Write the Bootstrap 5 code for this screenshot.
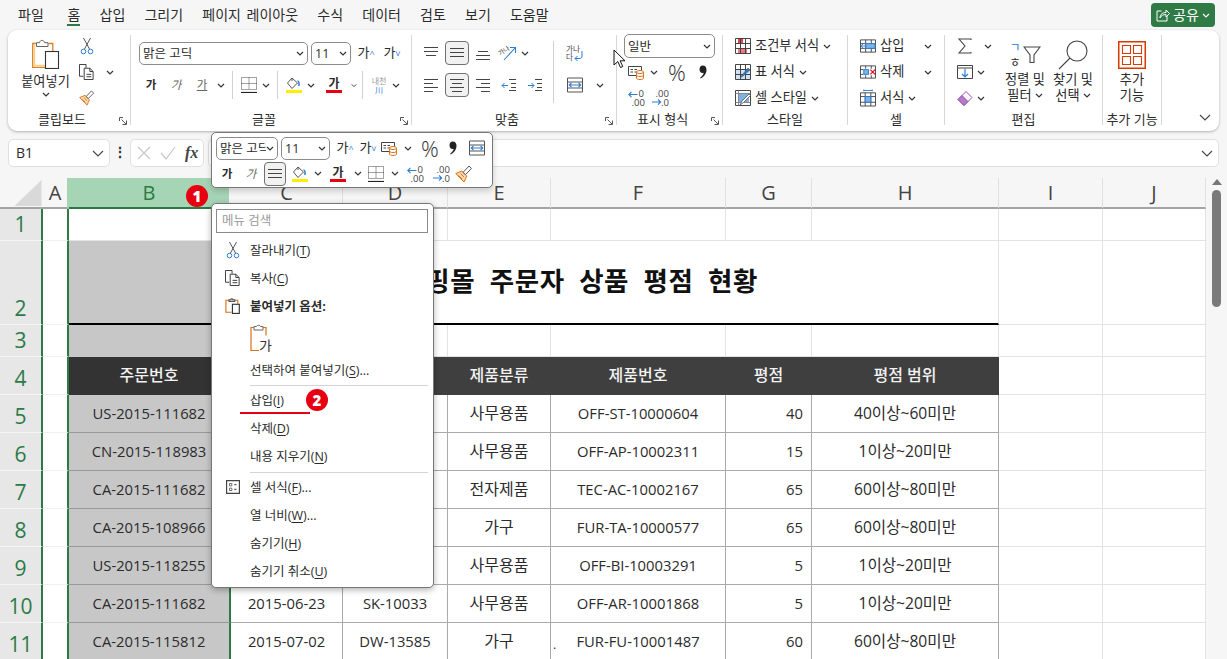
<!DOCTYPE html>
<html lang="ko">
<head>
<meta charset="utf-8">
<title>Excel</title>
<link href="https://cdn.jsdelivr.net/npm/bootstrap@5.3.0/dist/css/bootstrap.min.css" rel="stylesheet">
<style>
html,body{height:659px;overflow:hidden}
body{background:#f6f6f6;font-family:"Open Sans","Noto Sans CJK KR",sans-serif;color:#2b2b2b;font-size:12.5px;line-height:1.2;position:relative}
svg{display:block;flex:none;overflow:visible}
.tw2{width:2px}.tw6{width:6px}.tw8{width:8px}.tw10{width:10px}.tw12{width:12px}.tw14{width:14px}.tw16{width:16px}.tw18{width:18px}.tw20{width:20px}.tw22{width:22px}.tw24{width:24px}.tw26{width:26px}.tw28{width:28px}.tw30{width:30px}.tw32{width:32px}.tw34{width:34px}
.tw2,.tw6,.tw8,.tw10,.tw12,.tw14,.tw16,.tw18,.tw20,.tw22,.tw24,.tw26,.tw28,.tw30,.tw32,.tw34{flex:none}
.cv{height:5px}.h14{height:14px}.h16{height:16px}.h18{height:18px}.h20{height:20px}.h24{height:24px}
.tl{display:flex;align-items:center;justify-content:center;flex:none}
/* tabs */
.tabbar{height:30px;padding-left:18px;gap:19.2px;font-size:14px;word-spacing:2px}
.tabitem{height:30px;line-height:30px;position:relative;white-space:nowrap}
.tabitem:first-child{margin-right:4.500px}
.tabitem.on::after{content:"";position:absolute;left:0;right:0;top:24px;height:2px;background:#2a7a45}
.sharebtn{position:absolute;left:1151px;top:3px;width:64px;height:24px;background:#2f7b46;color:#fff;border-radius:4px;font-size:14px;gap:3px}
/* ribbon */
.ribbonbox{margin:0 8px;height:101px;background:#fff;border-radius:9px;box-shadow:0 1px 3px rgba(0,0,0,.28);padding:5px 0 6px;font-size:13.2px}
.rgroup{height:90px;border-right:1px solid #d8d8d8;flex:none}
.g1{width:123px}.g2{width:281px}.g3{width:205px}.g4{width:106px}.g5{width:125px}.g6{width:97px}.g7{width:158px}.g8{width:59px}
.rbody{height:77px;display:flex}
.rlabel{height:14px;line-height:14px;font-size:13px;display:flex;white-space:nowrap}
.rlabel span{flex:1;text-align:center}
.launch{width:8px;height:8px;margin:5px 3px 0 3px}
.rows3{margin-top:-2px;display:flex;flex-direction:column}
.rw{height:26px;display:flex;align-items:center;white-space:nowrap}
.rows2{padding-top:2px;display:flex;flex-direction:column}
.rw2{height:32px;display:flex;align-items:center}
.pastecol{width:71px;padding:4px 0 0 4px;display:flex;flex-direction:column;align-items:center;line-height:14px}
.pastecol svg.big{margin-bottom:5px}
.selbox{border:1px solid #8c8c8c;border-radius:5px;background:#fff;display:flex;align-items:center;justify-content:space-between;padding:0 3px 0 3px;flex:none;overflow:hidden;white-space:nowrap;font-size:12.5px}
.sf{width:169px;height:23px}.ss{width:40px;height:23px;margin-left:3px}.sn{width:91px;height:24px;margin-left:7px}
.boxed{background:#f1f1f1;border:1px solid #707070;border-radius:4px}
.sepv{width:1px;background:#d0d0d0;flex:none;align-self:stretch;margin:2px 5px}
.sepl{width:1px;height:62px;background:#d0d0d0;margin:6px 5px 0 5px;flex:none}
.kb{font-weight:700;font-size:11.5px}.ki{font-style:italic;color:#666;font-size:11.5px}.ku{text-decoration:underline;color:#666;font-size:11.5px}
.grow{font-size:13px;display:flex;justify-content:center}
.grow i{font-style:normal;color:#2b7cd3;font-size:9px;line-height:9px}
.fcic{border-bottom:3px solid #e60012;font-weight:700;line-height:13px;width:16px;text-align:center;font-size:12px}
.flic{border-bottom:3px solid #ffee00;width:16px;height:16px;display:block}
.phon{font-size:8px;line-height:9px;text-align:center;color:#999}
.phon b{display:block;font-weight:400;color:#2b7cd3}
.pad12{padding-left:12px}
.gapi{gap:4px}
.cmdcol{display:flex;flex-direction:column;align-items:center;text-align:center;flex:none;line-height:16px;padding-top:4px;white-space:nowrap}
.lnk{display:inline-flex;align-items:center;gap:3px}
.sortwrap{height:32px;display:flex;align-items:center;justify-content:center}
.col50{width:50px}.col46{width:46px}.col55{width:55px;padding-left:10px}
.w40t{width:40px}
/* formula */
.fbar{margin:8px 8px 0;height:28px}
.fbox{background:#fff;border:1px solid #e0e0e0;border-radius:5px;height:28px;display:flex;align-items:center}
.fname{width:102px;padding:0 5px 0 7px;justify-content:space-between;font-size:14px}
.fdots{width:20px;text-align:center;font-weight:700;font-size:14px;line-height:26px}
.ffx{width:74px;gap:9px;padding:0 0 0 6px}
.ffx em{font-family:"Liberation Serif",serif;font-weight:700;font-size:16px;color:#444}
.fin{flex:1;margin-left:4px;justify-content:flex-end;padding-right:5px}
/* sheet */
.sheetwrap{margin-top:11px;height:481px;overflow:hidden}
.xlgrid{table-layout:fixed;width:1206px;border-collapse:separate;border-spacing:0;flex:none;font-size:14.8px}
.xlgrid td{padding:0;text-align:center;white-space:nowrap;overflow:visible;background:#fff;border-right:1px solid #e3e3e3;border-bottom:1px solid #e3e3e3;vertical-align:middle;color:#2b2b2b}
.xlgrid tr.hrow td{background:#f6f6f6;font-size:20px;color:#444;border-bottom:2px solid #a4a4a4;border-right:1px solid #e0e0e0;height:31px}
.xlgrid tr.hrow td.cornr{border-right:0}
.xlgrid tr.hrow td.acolh{border-right:2px solid #a6d5b6}
.xlgrid tr.hrow td.hb{background:#a6d5b6;color:#2d7a46;border-right:2px solid #f6f6f6;border-bottom:2px solid #2d7a46}
.xlgrid td.rhd{background:#e7e7e7;color:#2d7a46;font-size:21px;border-right:2px solid #2d7a46;border-bottom:1px solid #f4f4f4;vertical-align:bottom;line-height:31px}
.xlgrid td.acol{border-right:2px solid #2d7a46;border-bottom-color:#f0f0f0}
.xlgrid td.bcell{background:#c7c7c7;border-right:2px solid #2d7a46;border-bottom:1px solid #999}
.xlgrid td.bfirst{background:#fff;border-bottom:1px solid #e3e3e3}
.xlgrid td.bnob{border-bottom-color:#c7c7c7}
.xlgrid td.ttl{font-size:26.5px;letter-spacing:.6px;word-spacing:7px;font-weight:700;color:#111;text-align:right;padding-right:240px;padding-bottom:1px;border-bottom:2px solid #000}
.xlgrid td.ttlb{border-bottom:2px solid #000}
.xlgrid td.dk{background:#3f3f3f;color:#f2f2f2;border-right:1px solid #3f3f3f;border-bottom-color:#3f3f3f;font-weight:500;font-size:16px}
.xlgrid td.dkb{background:#333;color:#f2f2f2;border-bottom-color:#333;font-size:16px;font-weight:500}
.xlgrid td.dc{border-right:1px solid #aaa;border-bottom:1px solid #aaa}
.xlgrid td.ko{font-size:16px}
.xlgrid td.mx{font-size:15.6px}
.xlgrid td.rt{text-align:right;padding-right:8px}
.dotmk{position:absolute;left:553px;top:638px;font-size:12px}
.vscroll{width:21px;height:481px;background:#f6f6f6;position:relative;display:flex;flex-direction:column;align-items:center;padding-top:1px;flex:none}
.vthumb{width:9px;height:117px;border-radius:5px;background:#7a7a7a;margin-top:5px}
/* floating */
.minibar{position:absolute;left:211px;top:132px;width:282px;height:56px;background:#fff;border:1px solid #777;border-radius:5px;box-shadow:0 3px 6px rgba(0,0,0,.18);padding:3px 0 0 4px;z-index:5}
.mrow{height:24px;display:flex;align-items:center}
.mrow2{height:25px;display:flex;align-items:center;margin-top:1px}
.msf{width:62px;height:23px}.mss{width:49px;height:23px;margin-left:3px}
.ctxmenu{position:absolute;left:211px;top:203px;width:223px;height:385px;background:#fff;border:1px solid #777;border-radius:5px;box-shadow:0 2px 6px rgba(0,0,0,.3);padding:5px 5px 0 4px;z-index:5;font-size:12.5px}
.ctxsearch{height:24px;border:1px solid #8a8a8a;color:#999;padding:0 5px;line-height:22px;font-size:12.5px;margin-bottom:3px}
.ctxrow{height:28px;display:flex;align-items:center;white-space:nowrap}
.ctxic{width:34px;display:flex;justify-content:center;flex:none}
.ctxpaste{height:36px;padding-left:34px;display:flex;align-items:center}
.ctxdiv{height:2px;margin-left:34px;border-bottom:1px solid #d4d4d4}
.ctxdiv.tall{height:3px}
.ctxrow u{text-underline-offset:2px}
.redbadge{position:absolute;width:22px;height:22px;border-radius:50%;background:#e60012;color:#fff;font-weight:800;font-size:15px;line-height:22px;text-align:center;z-index:6;font-family:"Open Sans",sans-serif}
.b1pos{left:186px;top:185px}.b2pos{left:306px;top:389px}
.redline{position:absolute;left:240px;top:412px;width:70px;height:2px;background:#e60012;z-index:6}
.mousec{position:absolute;left:613px;top:49px;z-index:7;width:13px;height:20px}
.cw0{width:43px}.cwa{width:26px}.cwb{width:162px}.cwc{width:112px}.cwd{width:105px}.cwe{width:103px}.cwf{width:175px}.cwg{width:86px}.cwh{width:187px}.cwi{width:104px}.cwj{width:103px}
.r32 td{height:32px}.r84 td{height:84px}.r38 td{height:38px}
.ps-6px{padding-left:6px}.ms-7px{margin-left:7px}.me-1px{margin-right:1px}
.pct{font-size:22px;color:#333;font-weight:300}
.sorttx{font-size:12px;line-height:15px;margin-right:2px;text-align:center}
.sorttx b{color:#2b7cd3;font-weight:400}
</style>
</head>
<body>
<svg width="0" height="0" class="position-absolute">
<defs>
<symbol id="cv" viewBox="0 0 8 5"><path d="M1 1l3 3 3-3" fill="none" stroke="#333" stroke-width="1.2"/></symbol>
<symbol id="cvw" viewBox="0 0 8 5"><path d="M1 1l3 3 3-3" fill="none" stroke="#fff" stroke-width="1.2"/></symbol>
<symbol id="cut" viewBox="0 0 14 18"><path d="M3.5 1l6 11M10.5 1l-6 11" fill="none" stroke="#555"/><circle cx="3.5" cy="14.5" r="2.3" fill="none" stroke="#2b7cd3"/><circle cx="10.5" cy="14.5" r="2.3" fill="none" stroke="#2b7cd3"/></symbol>
<symbol id="copy" viewBox="0 0 17 17"><path d="M4.5 13H.5V.5h7V4" fill="none" stroke="#333"/><path d="M5.5 4.5h6l3.500 3.500v8.500h-9.500zM11.500 4.500V8h3.500M8 11h5M8 13.500h5" fill="none" stroke="#333"/></symbol>
<symbol id="brush" viewBox="0 0 18 18"><path d="M.8 8.500l6-2.500 5 5-2.800 6z" fill="#fbd9ac" stroke="#d9701a"/><path d="M3.500 10.500l3.500 3.500M5.500 8.500l3.500 3.500" stroke="#d9701a" fill="none"/><path d="M8 7.500l6-6.500 2.500 2.500-6 6z" fill="#fff" stroke="#555"/></symbol>
<symbol id="pastebig" viewBox="0 0 28 30"><path d="M4 4.500H.7v23.800h12.800" fill="#fff" stroke="#d9821f" stroke-width="1.300"/><path d="M16.500 4.500h4.300v7.500" fill="none" stroke="#d9821f" stroke-width="1.300"/><path d="M2.300 6v20.700h11" fill="none" stroke="#f6d08f" stroke-width="1.800"/><path d="M4.500 7.500V3.700h3C8 .6 12 .6 12.500 3.700h3.500v3.800z" fill="#fff" stroke="#666"/><rect x="13.500" y="12.500" width="13" height="17" fill="#fff" stroke="#333" stroke-width="1.100"/></symbol>
<symbol id="borderi" viewBox="0 0 16 16"><path d="M.5.5h15v12H.5zM8 .5v12M.5 6.500h15" fill="none" stroke="#444" stroke-dasharray="1 1"/><path d="M0 15.500h16" stroke="#222" stroke-width="1.200"/></symbol>
<symbol id="bucket" viewBox="0 0 16 13"><path d="M6 1L1.500 6 6 11.500l5.500-5.500z" fill="#fff" stroke="#555"/><path d="M6 1v3" stroke="#555"/><path d="M13 9V6c0-1-1-2-1.500-2" fill="none" stroke="#2b7cd3" stroke-width="1.500"/></symbol>
<symbol id="alT" viewBox="0 0 16 16"><path d="M1 2.500h14M1 6.500h14M3 10.500h10" stroke="#444" fill="none"/></symbol>
<symbol id="alM" viewBox="0 0 16 16"><path d="M1 3.500h14M1 7.500h14M1 11.500h14" stroke="#444" fill="none"/></symbol>
<symbol id="alB" viewBox="0 0 16 16"><path d="M3 6.500h10M1 10.500h14M1 14.500h14" stroke="#444" fill="none"/></symbol>
<symbol id="alL" viewBox="0 0 16 16"><path d="M1 2.500h14M1 6.500h9M1 10.500h14M1 14.500h9" stroke="#444" fill="none"/></symbol>
<symbol id="alC" viewBox="0 0 16 16"><path d="M1 2.500h14M3 6.500h10M1 10.500h14M3 14.500h10" stroke="#444" fill="none"/></symbol>
<symbol id="alR" viewBox="0 0 16 16"><path d="M1 2.500h14M6 6.500h9M1 10.500h14M6 14.500h9" stroke="#444" fill="none"/></symbol>
<symbol id="indD" viewBox="0 0 16 16"><path d="M8 2.500h7M8 13.500h7M10 6.500h5M10 10.500h5" stroke="#444" fill="none"/><path d="M7 8.500H1M3.500 6L1 8.500 3.500 11" stroke="#2b7cd3" fill="none"/></symbol>
<symbol id="indI" viewBox="0 0 16 16"><path d="M8 2.500h7M8 13.500h7M10 6.500h5M10 10.500h5" stroke="#444" fill="none"/><path d="M1 8.500h6M4.500 6L7 8.500 4.500 11" stroke="#2b7cd3" fill="none"/></symbol>
<symbol id="orient" viewBox="0 0 18 16"><text x="0" y="9" font-size="6.500" fill="#444" transform="rotate(-35 4 8)" font-family="Noto Sans CJK KR">가나</text><path d="M5 15L16 3M11 2.500h5.500V8" fill="none" stroke="#2b7cd3" stroke-width="1.100"/></symbol>
<symbol id="wrapi" viewBox="0 0 18 18"><text x="0" y="8" font-size="7.500" fill="#444" font-family="Noto Sans CJK KR">가나</text><text x="0" y="16" font-size="7.500" fill="#444" font-family="Noto Sans CJK KR">다</text><path d="M16 7v5c0 2-1 2.500-2 2.500H9M11.500 12L9 14.500l2.500 2.500" fill="none" stroke="#2b7cd3"/></symbol>
<symbol id="merge" viewBox="0 0 16 16"><path d="M.5 1h15v14H.5zM.5 5h15M.5 11h15" fill="none" stroke="#555"/><path d="M2 8h12M4.500 5.800L2.200 8l2.300 2.200M11.500 5.800L13.800 8l-2.300 2.200" fill="none" stroke="#2b7cd3" stroke-width="1.100"/></symbol>
<symbol id="celf" viewBox="0 0 16 16"><path d="M.5 2.500h13v9H.5z" fill="#fff" stroke="#444"/><path d="M2.500 5.500h2.500M6.500 5.500H9M2.500 8h2.500M6.500 8H9" stroke="#444"/><path d="M8.500 8v6c0 2 7 2 7 0V8" fill="#fff" stroke="#d9701a"/><ellipse cx="12" cy="8" rx="3.500" ry="1.500" fill="#fff" stroke="#d9701a"/><path d="M8.500 11c0 2 7 2 7 0" fill="none" stroke="#d9701a"/></symbol>
<symbol id="cma" viewBox="0 0 8 14"><path d="M3.800.500c2.400 0 3.700 1.800 3.700 4.200 0 3.800-2.500 7-5.800 8.800l-.6-.8c2.100-1.500 3.400-3.300 3.600-4.900-.3.200-.7.300-1.200.3C1.800 8.100.5 6.400.5 4.300.5 2.200 1.800.5 3.800.500z" fill="#222"/></symbol>
<symbol id="decL" viewBox="0 0 16 16"><text x="10.500" y="7" font-size="9.500" fill="#444" font-family="Open Sans">0</text><text x="3.500" y="15.500" font-size="9.500" fill="#444" font-family="Open Sans">.00</text><path d="M9.500 4.500H.7M3.500 1.800L.8 4.500l2.700 2.700" fill="none" stroke="#2b7cd3" stroke-width="1.100"/></symbol>
<symbol id="decR" viewBox="0 0 16 16"><text x="3.500" y="7" font-size="9.500" fill="#444" font-family="Open Sans">.00</text><text x="9" y="15.500" font-size="9.500" fill="#444" font-family="Open Sans">.0</text><path d="M0 12h8.500M6 9.300l2.700 2.700L6 14.700" fill="none" stroke="#2b7cd3" stroke-width="1.100"/></symbol>
<symbol id="gcond" viewBox="0 0 16 16"><rect x="3" y="1" width="5" height="5" fill="#e6404a"/><rect x="3" y="10" width="9" height="5" fill="#ee7a80"/><path d="M.5.500h15v15H.5zM.5 5.500h15M.5 10.500h15M5.500.500v15M10.500.500v15" fill="none" stroke="#444"/></symbol>
<symbol id="gtab" viewBox="0 0 16 16"><path d="M1 5h14v10H1z" fill="#cfe3f5"/><path d="M.5.500h15v15H.5zM.5 5.500h15M.5 10.500h15M5.500.500v15M10.500.500v15" fill="none" stroke="#444"/><path d="M5 14l2-3 6-7 2 2-7 6z" fill="#2b7cd3" stroke="#555" stroke-width=".6"/></symbol>
<symbol id="gsty" viewBox="0 0 16 16"><path d="M3 3h11v9H3z" fill="#7db2e6"/><path d="M.5.500h15v15H.5z" fill="none" stroke="#444"/><path d="M3.500.500v15M.5 3.500h15M.5 12.500h15" stroke="#888" fill="none"/><path d="M5 15l2-4 7-7 1.500 1.500-7 7z" fill="#fff" stroke="#555" stroke-width=".8"/></symbol>
<symbol id="cins" viewBox="0 0 17 16"><path d="M.5 1.500h16v13H.5zM.5 5.500h16M.5 10.500h16M6 1.500v13M12 1.500v13" fill="none" stroke="#444"/><rect x="6" y="5.500" width="10" height="5" fill="#7db2e6" stroke="#2b7cd3"/><path d="M7 8H1M3.500 5.500L1 8l2.500 2.500" fill="#fff" stroke="#2b7cd3"/></symbol>
<symbol id="cdel" viewBox="0 0 17 16"><path d="M.5 1.500h16M.5 14.500h16M.5 1.500v13M16.500 1.500v13M.5 5.500h3M.5 10.500h3M6 1.500v3M6 11.500v3M12 1.500v3M12 11.500v3" fill="none" stroke="#444"/><rect x="4" y="5.500" width="5" height="5" fill="#7db2e6" stroke="#2b7cd3"/><path d="M11 5.500l5 5M16 5.500l-5 5" stroke="#e60012" stroke-width="1.200"/></symbol>
<symbol id="cfmt" viewBox="0 0 17 18"><path d="M.5 3.500h16v14H.5zM.5 7.500h16M.5 13.500h16M5.500 3.500v14M11.500 3.500v14" fill="none" stroke="#444"/><rect x="5.500" y="7.500" width="6" height="6" fill="#7db2e6" stroke="#2b7cd3"/><path d="M4 1h9M4 0v2M13 0v2" stroke="#2b7cd3" fill="none"/></symbol>
<symbol id="sigma" viewBox="0 0 14 16"><path d="M13 2V1H1l6 7-6 7h12v-1" fill="none" stroke="#444" stroke-width="1.100"/></symbol>
<symbol id="filldn" viewBox="0 0 16 14"><path d="M.5.500h15v13H.5zM.5 3h15" fill="none" stroke="#444"/><path d="M8 4v8M5 9l3 3 3-3" fill="none" stroke="#2b7cd3" stroke-width="1.200"/></symbol>
<symbol id="eraser" viewBox="0 0 16 16"><path d="M1 9.500L9 1.500l6 6-8 8z" fill="#fff" stroke="#9c4fb5"/><path d="M1 9.500L5 5.500l6 6-4 4z" fill="#b27cc6" stroke="#9c4fb5"/></symbol>
<symbol id="funnel" viewBox="0 0 18 18"><path d="M1 1h16l-6 8v7.500H7V9z" fill="#fff" stroke="#444" stroke-width="1.100"/></symbol>
<symbol id="lens" viewBox="0 0 30 30"><circle cx="19" cy="11" r="10" fill="#fff" stroke="#444" stroke-width="1.100"/><path d="M12 18L1 29" stroke="#444" stroke-width="1.100"/></symbol>
<symbol id="addin" viewBox="0 0 28 28"><path d="M.75.750h26.500v26.500H.75z" fill="none" stroke="#d83b01" stroke-width="1.500"/><path d="M4.500 4.500h8v8h-8zM15.500 4.500h8v8h-8zM4.500 15.500h8v8h-8zM15.500 15.500h8v8h-8z" fill="none" stroke="#d83b01" stroke-width="1.100"/></symbol>
<symbol id="launch" viewBox="0 0 8 8"><path d="M.5 4V.5H4M2.500 2.500l4.500 4.500M7.500 3.500v4H3.500" fill="none" stroke="#555"/></symbol>
<symbol id="sharei" viewBox="0 0 14 14"><path d="M5.500 3H1v10h10V8" fill="none" stroke="#fff"/><path d="M4 10c0-4 3-5.500 6-5.500V2l3.500 3.500L10 9V6.500C7.500 6.500 5 7.500 4 10z" fill="none" stroke="#fff"/></symbol>
<symbol id="pastesm" viewBox="0 0 14 14"><path d="M3.500 2H.8v10.500h5" fill="none" stroke="#d9701a"/><path d="M8.500 2h2.700v3" fill="none" stroke="#d9701a"/><path d="M3.500 3V1.500H5C5.300.5 6.700.5 7 1.500h1.500V3z" fill="#fff" stroke="#555"/><rect x="6.500" y="5.500" width="6" height="8" fill="#fff" stroke="#333"/></symbol>
<symbol id="pastetx" viewBox="0 0 24 28"><path d="M5 3.500H1v23h8" fill="none" stroke="#d9701a" stroke-width="1.200"/><path d="M12 3.500h4v8" fill="none" stroke="#d9701a" stroke-width="1.200"/><path d="M4 6V2.500h2.500C7 .8 10 .8 10.500 2.500H13V6z" fill="#fff" stroke="#666"/><text x="9" y="27" font-size="14" fill="#333" font-family="Noto Sans CJK KR">가</text></symbol>
<symbol id="fmtc" viewBox="0 0 12 12"><path d="M.5.500h11v11H.5z" fill="#fff" stroke="#444"/><path d="M3 3h2v2H3zM3 7h2v2H3z" fill="none" stroke="#666" stroke-width=".8"/><path d="M7 4h2M7 8h2" stroke="#666"/></symbol>
<symbol id="cross" viewBox="0 0 14 14"><path d="M1 1l12 12M13 1L1 13" stroke="#c8c8c8" stroke-width="1.200"/></symbol>
<symbol id="check" viewBox="0 0 16 14"><path d="M1 7l5 6L15 1" fill="none" stroke="#c8c8c8" stroke-width="1.200"/></symbol>
<symbol id="dnlg" viewBox="0 0 12 7"><path d="M1 1l5 5 5-5" fill="none" stroke="#444" stroke-width="1.100"/></symbol>
<symbol id="corner" viewBox="0 0 28 27"><path d="M28 0v27H0z" fill="#d9d9d9"/></symbol>
</defs>
</svg>

<nav class="tabbar d-flex align-items-start">
  <span class="tabitem">파일</span><span class="tabitem on">홈</span><span class="tabitem">삽입</span><span class="tabitem">그리기</span><span class="tabitem">페이지 레이아웃</span><span class="tabitem">수식</span><span class="tabitem">데이터</span><span class="tabitem">검토</span><span class="tabitem">보기</span><span class="tabitem">도움말</span>
</nav>
<div class="sharebtn d-flex align-items-center justify-content-center"><svg class="tw14 h14"><use href="#sharei"/></svg><span>공유</span><svg class="tw8 cv"><use href="#cvw"/></svg></div>

<section class="ribbonbox d-flex">
  <!-- clipboard -->
  <div class="rgroup g1">
    <div class="rbody">
      <div class="pastecol"><svg class="big tw28" height="30"><use href="#pastebig"/></svg><span>붙여넣기</span><svg class="tw8 cv mt-1"><use href="#cv"/></svg></div>
      <div class="rows3">
        <div class="rw"><svg class="tw16 h18"><use href="#cut"/></svg></div>
        <div class="rw"><svg class="tw16 h16"><use href="#copy"/></svg><svg class="tw30 cv"><use href="#cv"/></svg></div>
        <div class="rw"><svg class="tw16 h16"><use href="#brush"/></svg></div>
      </div>
    </div>
    <div class="rlabel"><span>클립보드</span><svg class="launch"><use href="#launch"/></svg></div>
  </div>
  <!-- font -->
  <div class="rgroup g2">
    <div class="rbody ps-2"><div class="rows2">
      <div class="rw2">
        <div class="selbox sf"><span>맑은 고딕</span><svg class="tw8 cv"><use href="#cv"/></svg></div>
        <div class="selbox ss"><span>11</span><svg class="tw8 cv"><use href="#cv"/></svg></div>
        <span class="tl tw30 grow">가<i>^</i></span><span class="tl tw22 grow">가<i>˅</i></span>
      </div>
      <div class="rw2">
        <span class="tl tw24 kb">가</span><span class="tl tw26 ki">가</span><span class="tl tw26 ku">가</span><svg class="tw12 cv"><use href="#cv"/></svg>
        <i class="sepv"></i>
        <svg class="tw22 h16"><use href="#borderi"/></svg><svg class="tw12 cv"><use href="#cv"/></svg>
        <i class="sepv"></i>
        <span class="tl tw22"><span class="flic"><svg class="tw16" height="13"><use href="#bucket"/></svg></span></span><svg class="tw12 cv"><use href="#cv"/></svg>
        <span class="tl tw34"><span class="fcic">가</span></span><svg class="tw6 cv"><use href="#cv"/></svg>
        <i class="sepv"></i>
        <span class="tl tw22 phon"><span>내천<b>川</b></span></span><svg class="tw12 cv"><use href="#cv"/></svg>
      </div>
    </div></div>
    <div class="rlabel"><span>글꼴</span><svg class="launch"><use href="#launch"/></svg></div>
  </div>
  <!-- align -->
  <div class="rgroup g3">
    <div class="rbody">
      <div class="rows2 ps-6px">
        <div class="rw2"><svg class="tw26 h16"><use href="#alT"/></svg><span class="tl tw26"><span class="tl boxed tw24 h24"><svg class="tw16 h16"><use href="#alM"/></svg></span></span><svg class="tw26 h16"><use href="#alB"/></svg><svg class="tw24 h16"><use href="#orient"/></svg><svg class="tw10 cv"><use href="#cv"/></svg></div>
        <div class="rw2"><svg class="tw26 h16"><use href="#alL"/></svg><span class="tl tw26"><span class="tl boxed tw24 h24"><svg class="tw16 h16"><use href="#alC"/></svg></span></span><svg class="tw26 h16"><use href="#alR"/></svg><svg class="tw26 h16"><use href="#indD"/></svg><svg class="tw26 h16"><use href="#indI"/></svg></div>
      </div>
      <i class="sepl"></i>
      <div class="rows2">
        <div class="rw2"><svg class="tw32 h18"><use href="#wrapi"/></svg></div>
        <div class="rw2"><svg class="tw32 h16"><use href="#merge"/></svg><svg class="tw18 cv"><use href="#cv"/></svg></div>
      </div>
    </div>
    <div class="rlabel"><span>맞춤</span><svg class="launch"><use href="#launch"/></svg></div>
  </div>
  <!-- number -->
  <div class="rgroup g4">
    <div class="rbody"><div class="rows3">
      <div class="rw"><div class="selbox sn"><span>일반</span><svg class="tw8 cv"><use href="#cv"/></svg></div></div>
      <div class="rw ms-7px"><svg class="tw24 h16"><use href="#celf"/></svg><svg class="tw12 cv"><use href="#cv"/></svg><span class="tl tw34 pct">%</span><svg class="tw18 h14"><use href="#cma"/></svg></div>
      <div class="rw ms-7px"><svg class="tw24 h16"><use href="#decL"/></svg><svg class="tw24 h16"><use href="#decR"/></svg></div>
    </div></div>
    <div class="rlabel"><span>표시 형식</span><svg class="launch"><use href="#launch"/></svg></div>
  </div>
  <!-- styles -->
  <div class="rgroup g5">
    <div class="rbody pad12"><div class="rows3">
      <div class="rw gapi"><svg class="tw16 h16"><use href="#gcond"/></svg><span>조건부 서식</span><svg class="tw8 cv"><use href="#cv"/></svg></div>
      <div class="rw gapi"><svg class="tw16 h16"><use href="#gtab"/></svg><span>표 서식</span><svg class="tw8 cv"><use href="#cv"/></svg></div>
      <div class="rw gapi"><svg class="tw16 h16"><use href="#gsty"/></svg><span>셀 스타일</span><svg class="tw8 cv"><use href="#cv"/></svg></div>
    </div></div>
    <div class="rlabel"><span>스타일</span></div>
  </div>
  <!-- cells -->
  <div class="rgroup g6">
    <div class="rbody pad12"><div class="rows3">
      <div class="rw gapi"><svg class="tw16 h16"><use href="#cins"/></svg><span class="w40t">삽입</span><svg class="tw8 cv"><use href="#cv"/></svg></div>
      <div class="rw gapi"><svg class="tw16 h16"><use href="#cdel"/></svg><span class="w40t">삭제</span><svg class="tw8 cv"><use href="#cv"/></svg></div>
      <div class="rw gapi"><svg class="tw16 h18"><use href="#cfmt"/></svg><span>서식</span><svg class="tw8 cv"><use href="#cv"/></svg></div>
    </div></div>
    <div class="rlabel"><span>셀</span></div>
  </div>
  <!-- edit -->
  <div class="rgroup g7">
    <div class="rbody">
      <div class="rows3 col55">
        <div class="rw"><svg class="tw20 h16"><use href="#sigma"/></svg><svg class="tw18 cv ps-2"><use href="#cv"/></svg></div>
        <div class="rw"><svg class="tw20 h14"><use href="#filldn"/></svg><svg class="tw12 cv"><use href="#cv"/></svg></div>
        <div class="rw"><svg class="tw20 h16"><use href="#eraser"/></svg><svg class="tw12 cv"><use href="#cv"/></svg></div>
      </div>
      <div class="cmdcol col50"><div class="sortwrap"><span class="sorttx"><b>ㄱ</b><br>ㅎ</span><svg class="tw18 h18"><use href="#funnel"/></svg></div><span>정렬 및</span><span class="lnk">필터<svg class="tw8 cv"><use href="#cv"/></svg></span></div>
      <div class="cmdcol col46"><div class="sortwrap"><svg class="tw30" height="30"><use href="#lens"/></svg></div><span>찾기 및</span><span class="lnk">선택<svg class="tw8 cv"><use href="#cv"/></svg></span></div>
    </div>
    <div class="rlabel"><span>편집</span></div>
  </div>
  <!-- add-ins -->
  <div class="rgroup g8">
    <div class="rbody justify-content-center"><div class="cmdcol"><div class="sortwrap"><svg class="tw28" height="28"><use href="#addin"/></svg></div><span>추가</span><span>기능</span></div></div>
    <div class="rlabel"><span>추가 기능</span></div>
  </div>
  <div class="flex-grow-1 d-flex justify-content-end align-items-end pe-2 pb-1"><svg class="tw12" height="7"><use href="#dnlg"/></svg></div>
</section>

<div class="fbar d-flex">
  <div class="fbox fname"><span>B1</span><svg class="tw12" height="7"><use href="#dnlg"/></svg></div>
  <div class="fdots">⋮</div>
  <div class="fbox ffx"><svg class="tw14 h14"><use href="#cross"/></svg><svg class="tw16 h14"><use href="#check"/></svg><em>fx</em></div>
  <div class="fbox fin"><svg class="tw12" height="7"><use href="#dnlg"/></svg></div>
</div>

<main class="sheetwrap d-flex">
  <table class="xlgrid">
    <colgroup><col class="cw0"><col class="cwa"><col class="cwb"><col class="cwc"><col class="cwd"><col class="cwe"><col class="cwf"><col class="cwg"><col class="cwh"><col class="cwi"><col class="cwj"></colgroup>
    <tr class="hrow"><td class="cornr"><svg class="tw28 ms-auto me-1px" height="26"><use href="#corner"/></svg></td><td class="acolh">A</td><td class="hb">B</td><td>C</td><td>D</td><td>E</td><td>F</td><td>G</td><td>H</td><td>I</td><td>J</td></tr>
    <tr class="r32"><td class="rhd">1</td><td class="acol"></td><td class="bcell bfirst"></td><td></td><td></td><td></td><td></td><td></td><td></td><td></td><td></td></tr>
    <tr class="r84"><td class="rhd">2</td><td class="acol"></td><td class="bcell ttlb"></td><td class="ttl" colspan="6">쇼핑몰 주문자 상품 평점 현황</td><td></td><td></td></tr>
    <tr class="r32"><td class="rhd">3</td><td class="acol"></td><td class="bcell bnob"></td><td></td><td></td><td></td><td></td><td></td><td></td><td></td><td></td></tr>
    <tr class="r38"><td class="rhd">4</td><td class="acol"></td><td class="bcell dkb">주문번호</td><td class="dk"></td><td class="dk"></td><td class="dk">제품분류</td><td class="dk">제품번호</td><td class="dk">평점</td><td class="dk">평점 범위</td><td></td><td></td></tr>
    <tr class="r38"><td class="rhd">5</td><td class="acol"></td><td class="bcell">US-2015-111682</td><td class="dc"></td><td class="dc"></td><td class="dc ko">사무용품</td><td class="dc">OFF-ST-10000604</td><td class="dc rt">40</td><td class="dc mx">40이상~60미만</td><td></td><td></td></tr>
    <tr class="r38"><td class="rhd">6</td><td class="acol"></td><td class="bcell">CN-2015-118983</td><td class="dc"></td><td class="dc"></td><td class="dc ko">사무용품</td><td class="dc">OFF-AP-10002311</td><td class="dc rt">15</td><td class="dc mx">1이상~20미만</td><td></td><td></td></tr>
    <tr class="r38"><td class="rhd">7</td><td class="acol"></td><td class="bcell">CA-2015-111682</td><td class="dc"></td><td class="dc"></td><td class="dc ko">전자제품</td><td class="dc">TEC-AC-10002167</td><td class="dc rt">65</td><td class="dc mx">60이상~80미만</td><td></td><td></td></tr>
    <tr class="r38"><td class="rhd">8</td><td class="acol"></td><td class="bcell">CA-2015-108966</td><td class="dc"></td><td class="dc"></td><td class="dc ko">가구</td><td class="dc">FUR-TA-10000577</td><td class="dc rt">65</td><td class="dc mx">60이상~80미만</td><td></td><td></td></tr>
    <tr class="r38"><td class="rhd">9</td><td class="acol"></td><td class="bcell">US-2015-118255</td><td class="dc"></td><td class="dc"></td><td class="dc ko">사무용품</td><td class="dc">OFF-BI-10003291</td><td class="dc rt">5</td><td class="dc mx">1이상~20미만</td><td></td><td></td></tr>
    <tr class="r38"><td class="rhd">10</td><td class="acol"></td><td class="bcell">CA-2015-111682</td><td class="dc">2015-06-23</td><td class="dc">SK-10033</td><td class="dc ko">사무용품</td><td class="dc">OFF-AR-10001868</td><td class="dc rt">5</td><td class="dc mx">1이상~20미만</td><td></td><td></td></tr>
    <tr class="r38"><td class="rhd">11</td><td class="acol"></td><td class="bcell">CA-2015-115812</td><td class="dc">2015-07-02</td><td class="dc">DW-13585</td><td class="dc ko">가구</td><td class="dc">FUR-FU-10001487</td><td class="dc rt">60</td><td class="dc mx">60이상~80미만</td><td></td><td></td></tr>
  </table>
  <aside class="vscroll"><svg class="tw10" height="6" viewBox="0 0 10 6"><path d="M5 0l5 6H0z" fill="#777"/></svg><div class="vthumb"></div></aside>
</main>
<span class="dotmk">.</span>

<div class="minibar">
  <div class="mrow">
    <div class="selbox msf"><span class="overflow-hidden">맑은 고딕</span><svg class="tw8 cv"><use href="#cv"/></svg></div>
    <div class="selbox mss"><span>11</span><svg class="tw8 cv"><use href="#cv"/></svg></div>
    <span class="tl tw30 grow">가<i>^</i></span><span class="tl tw16 grow">가<i>˅</i></span>
    <svg class="tw26 h16"><use href="#celf"/></svg><svg class="tw12 cv"><use href="#cv"/></svg><span class="tl tw32 pct">%</span><svg class="tw14 h14"><use href="#cma"/></svg><svg class="tw34 h16"><use href="#merge"/></svg>
  </div>
  <div class="mrow2">
    <span class="tl tw22 kb">가</span><span class="tl tw26 ki">가</span><span class="tl boxed tw22 h24"><svg class="tw16 h16"><use href="#alM"/></svg></span>
    <span class="tl tw28"><span class="flic"><svg class="tw16" height="13"><use href="#bucket"/></svg></span></span><svg class="tw8 cv"><use href="#cv"/></svg>
    <span class="tl tw32"><span class="fcic">가</span></span><svg class="tw8 cv"><use href="#cv"/></svg>
    <svg class="tw28 h16"><use href="#borderi"/></svg><svg class="tw10 cv"><use href="#cv"/></svg>
    <svg class="tw30 h16"><use href="#decL"/></svg><svg class="tw22 h16"><use href="#decR"/></svg><svg class="tw24 h18"><use href="#brush"/></svg>
  </div>
</div>

<div class="ctxmenu">
  <div class="ctxsearch">메뉴 검색</div>
  <div class="ctxrow"><span class="ctxic"><svg class="tw14 h18"><use href="#cut"/></svg></span>잘라내기(<u>T</u>)</div>
  <div class="ctxrow"><span class="ctxic"><svg class="tw16 h16"><use href="#copy"/></svg></span>복사(<u>C</u>)</div>
  <div class="ctxrow fw-bold"><span class="ctxic"><svg class="tw16 h16"><use href="#pastesm"/></svg></span>붙여넣기 옵션:</div>
  <div class="ctxpaste"><svg class="tw24" height="28"><use href="#pastetx"/></svg></div>
  <div class="ctxrow"><span class="ctxic"></span>선택하여 붙여넣기(<u>S</u>)...</div>
  <div class="ctxdiv"></div>
  <div class="ctxrow"><span class="ctxic"></span>삽입(<u>I</u>)</div>
  <div class="ctxrow"><span class="ctxic"></span>삭제(<u>D</u>)</div>
  <div class="ctxrow"><span class="ctxic"></span>내용 지우기(<u>N</u>)</div>
  <div class="ctxdiv tall"></div>
  <div class="ctxrow"><span class="ctxic"><svg class="tw14" height="14"><use href="#fmtc"/></svg></span>셀 서식(<u>F</u>)...</div>
  <div class="ctxrow"><span class="ctxic"></span>열 너비(<u>W</u>)...</div>
  <div class="ctxrow"><span class="ctxic"></span>숨기기(<u>H</u>)</div>
  <div class="ctxrow"><span class="ctxic"></span>숨기기 취소(<u>U</u>)</div>
</div>

<span class="redbadge b1pos">1</span>
<span class="redbadge b2pos">2</span>
<i class="redline"></i>
<svg class="mousec" viewBox="0 0 13 20"><path d="M1 1v15l3.800-3.500 2.700 6 2.300-1-2.700-5.700H12z" fill="#fff" stroke="#111"/></svg>
</body>
</html>
